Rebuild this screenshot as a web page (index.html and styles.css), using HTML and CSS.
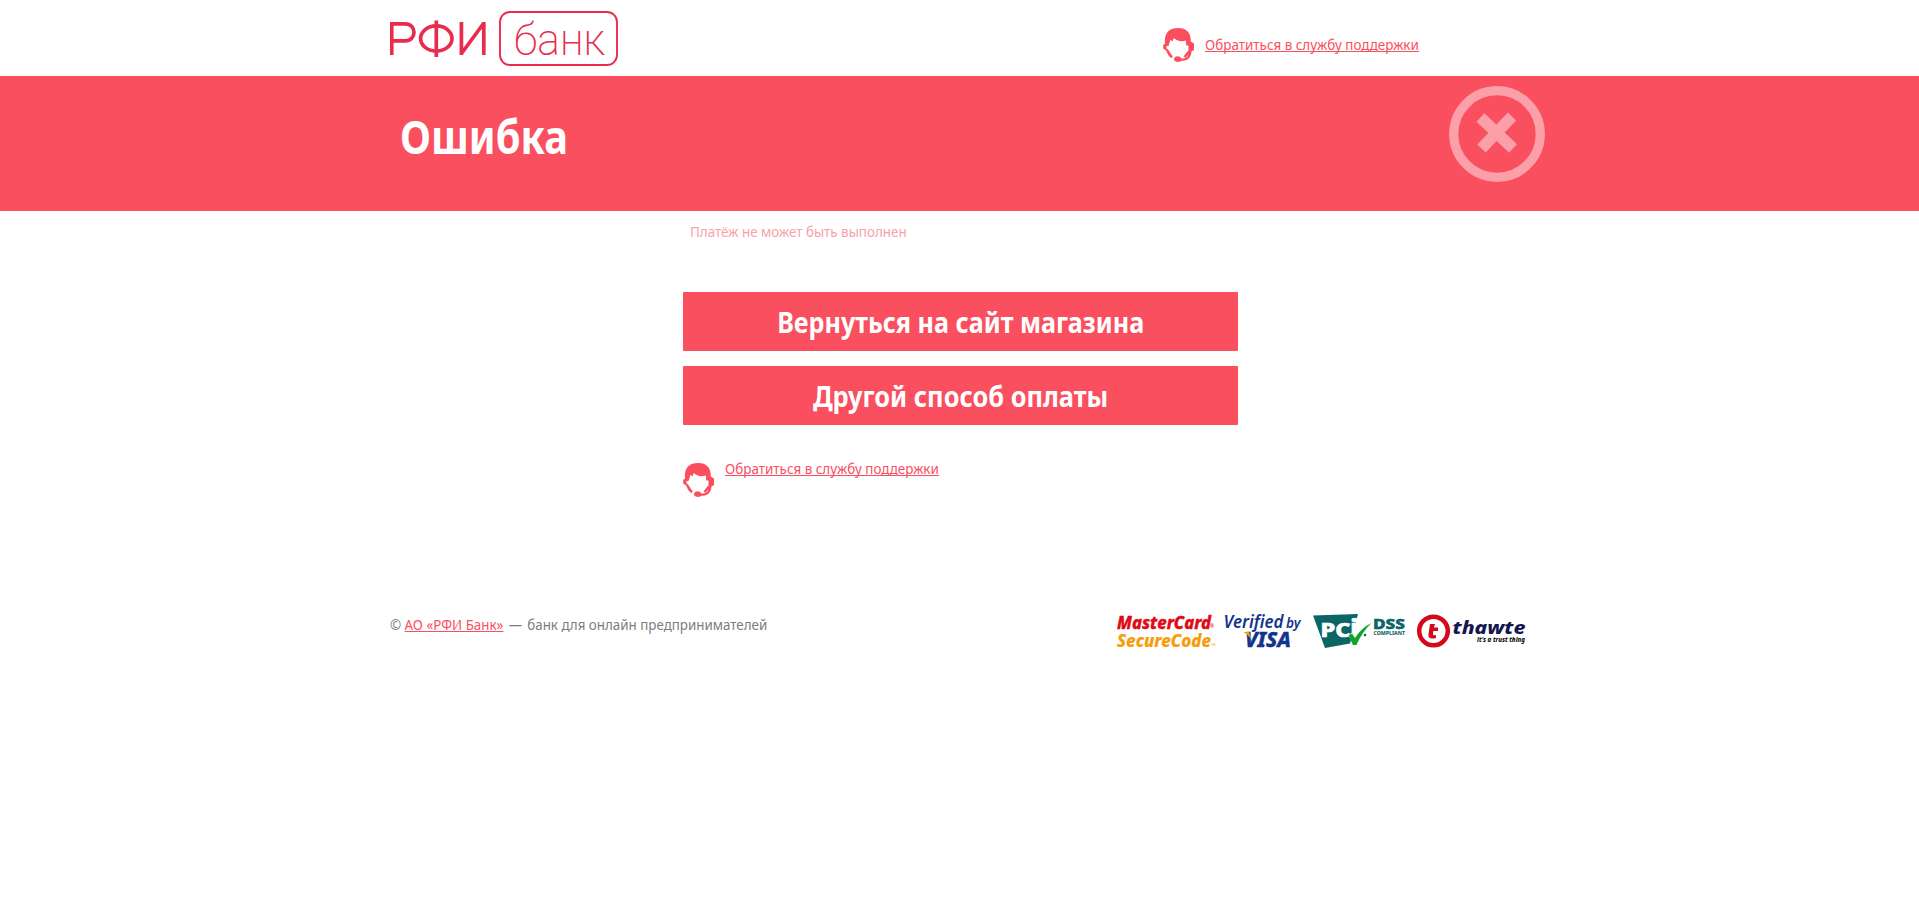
FILE: index.html
```html
<!DOCTYPE html>
<html lang="ru">
<head>
<meta charset="utf-8">
<title>Ошибка</title>
<link rel="stylesheet" href="styles.css">
</head>
<body>
<svg class="defs" width="0" height="0" aria-hidden="true">
  <symbol id="operator" viewBox="0 0 31 34">
    <path fill="#fb4f5f" d="M2 15.500C1 5 6 0 15 0C24 0 28 5 27.800 13.500L31 15.500V22L28.500 23.500C28 29.500 25 32.800 18.500 32.800C17 34.600 11 34.500 11 31.200C11 27.500 17 27.200 18.300 30.400C21 30.700 24.500 30 25.500 26.500L22.300 29.800L20.500 28.300C23 26 22.500 25 25.500 22.500V17.500L23.300 17.500L22.800 12.500C18.500 14 15 13.500 10.800 10L9.500 13.500L7.500 11.700L5.500 18L3.500 18V20.500C6.500 22 6 24 9.800 28.300L8.300 30.200C4.500 27 4.300 24.500 3 22.500L0.200 20.500V17Z"/>
  </symbol>
</svg>
<header class="container header">
  <svg class="logo" width="230" height="76" viewBox="0 0 230 76">
    <g fill="none" stroke="#e92c4d">
      <g stroke-width="3.700">
        <path d="M1.700 55V23.800H15C27 23.800 27 40.800 15 40.800H2"/>
        <ellipse cx="46.300" cy="38.500" rx="15.700" ry="12.600"/>
        <path d="M46.300 20.500V57M71.400 22V55M93.800 22V55M71.500 53.500L93.500 23.500"/>
      </g>
      <rect x="110" y="12" width="117" height="53" rx="10" stroke-width="1.900"/>
    </g>
    <text x="124" y="54.500" textLength="91" lengthAdjust="spacingAndGlyphs" class="logo-text">банк</text>
  </svg>
  <div class="support support-top">
    <svg width="31" height="34"><use href="#operator"/></svg>
    <a href="#" class="link"><span class="fit fit-support">Обратиться в службу поддержки</span></a>
  </div>
</header>
<section class="band">
  <div class="container band-inner">
    <h1 class="title"><span class="fit fit-title">Ошибка</span></h1>
    <svg class="cross" width="96" height="96" viewBox="0 0 96 96">
      <circle cx="48" cy="48" r="43.300" fill="none" stroke="#fb9fa8" stroke-width="9.200"/>
      <path d="M31.500 31.500L64 62.500M63 30.500L32.500 62.500" stroke="#fb9fa8" stroke-width="11.500"/>
    </svg>
  </div>
</section>
<main class="main">
  <p class="message"><span class="fit fit-message">Платёж не может быть выполнен</span></p>
  <a class="button" href="#"><span class="fit fit-b1">Вернуться на сайт магазина</span></a>
  <a class="button" href="#"><span class="fit fit-b2">Другой способ оплаты</span></a>
  <div class="support support-main">
    <svg width="31" height="34"><use href="#operator"/></svg>
    <a href="#" class="link"><span class="fit fit-support">Обратиться в службу поддержки</span></a>
  </div>
</main>
<footer class="container footer">
  <p class="copy"><span class="fit fit-copy">© <a href="#">АО «РФИ Банк»</a> <span class="dash">—</span> банк для онлайн предпринимателей</span></p>
  <svg class="badges" width="420" height="44" viewBox="1110 608 420 44">
    <g class="oblique bold">
      <text x="1117" y="628.500" font-size="18.500" fill="#df0a17" stroke="#df0a17" stroke-width=".4" textLength="94" lengthAdjust="spacingAndGlyphs">MasterCard</text>
      <text x="1117" y="647" font-size="18.500" fill="#f59d0a" stroke="#f59d0a" stroke-width=".2" textLength="94" lengthAdjust="spacingAndGlyphs">SecureCode</text>
    </g>
    <text x="1210" y="628" font-size="5" fill="#df0a17">®</text>
    <text x="1211" y="646" font-size="3" fill="#f59d0a">TM</text>
    <g fill="#12348a" class="oblique">
      <text x="1223.500" y="628" font-size="17.500" font-weight="600" textLength="60" lengthAdjust="spacingAndGlyphs">Verified</text>
      <text x="1286" y="628" font-size="15" font-weight="600" textLength="14.500" lengthAdjust="spacingAndGlyphs">by</text>
      <text x="1245" y="647" font-size="20.500" class="bold" stroke="#12348a" stroke-width=".4" textLength="46" lengthAdjust="spacingAndGlyphs">VISA</text>
    </g>
    <path d="M1243 632H1249L1251 639C1249 636 1247 634 1243 632Z" fill="#f5a40a"/>
    <path d="M1313 615.500L1358 614L1350 643.500L1325 648Z" fill="#0a6567"/>
    <path d="M1350 634L1355 641Q1361 630 1370 624" fill="none" stroke="#fff" stroke-width="5"/>
    <text x="1320.500" y="637" font-size="19" class="bold heavy" fill="#fff" textLength="30" lengthAdjust="spacingAndGlyphs">PC</text>
    <text x="1350" y="637" font-size="24" class="bold heavy" fill="#fff" textLength="9" lengthAdjust="spacingAndGlyphs">i</text>
    <circle cx="1365" cy="635" r="1.300" fill="#0a6567"/>
    <path d="M1348.500 635.500L1352 633.500L1355 638Q1361 628 1371.500 623Q1362 632 1356.500 645H1353Z" fill="#12a32d"/>
    <g fill="#0a6567" class="bold">
      <text x="1373" y="629" font-size="14.500" stroke="#0a6567" stroke-width=".5" textLength="32" lengthAdjust="spacingAndGlyphs">DSS</text>
      <text x="1373.500" y="635" font-size="5.500" textLength="31.500" lengthAdjust="spacingAndGlyphs">COMPLIANT</text>
    </g>
    <circle cx="1433.500" cy="631" r="14.300" fill="#fff" stroke="#d30a1b" stroke-width="4.500"/>
    <path d="M1430 624H1435L1434 627.500H1438V631H1433.300L1433 634Q1433 636 1436 635V638Q1427.500 640 1428.500 634Z" fill="#d30a1b"/>
    <text x="1452.500" y="634" font-size="17" class="oblique bold" fill="#141650" textLength="73" lengthAdjust="spacingAndGlyphs">thawte</text>
    <text x="1477" y="641.500" font-size="7.500" class="oblique bold" fill="#111" textLength="48" lengthAdjust="spacingAndGlyphs">it's a trust thing</text>
  </svg>
</footer>
</body>
</html>
```
FILE: styles.css
```css
* { box-sizing: border-box; }
body { margin: 0; background: #fff; color: #7d7d7d; font: 15px/20px "Noto Sans", "Open Sans", sans-serif; }
a { color: #f94f5f; }
h1, p { margin: 0; }
.defs { display: block; }
.container { width: 1139px; margin: 0 auto; }
.fit { display: inline-block; white-space: nowrap; transform-origin: left center; }
.fit-support { transform: scaleX(.896); }
.fit-title { transform: scaleX(.847); }
.fit-message { transform: scaleX(.894); }
.fit-b1 { transform: scaleX(.867); }
.fit-b2 { transform: scaleX(.876); }
.fit-copy { transform: scaleX(.89); }
.dash { margin: 0 2px; }
.header { display: flex; height: 76px; }
.logo { display: block; }
.logo-text { font: 200 45px Roboto, sans-serif; fill: #e92c4d; }
.support { display: flex; gap: 11px; }
.support svg { display: block; flex: none; }
.support-top { margin-left: 543px; padding-top: 28px; }
.support-top .link { margin-top: 6px; }
.link { display: block; height: 20px; text-decoration: none; }
.link .fit { height: 18px; line-height: 20px; border-bottom: 1px solid #f94f5f; }
.band { height: 135px; background: #f94f5f; }
.band-inner { display: flex; justify-content: space-between; padding: 10px 0 0 10px; }
.title { color: #fff; font-size: 47px; line-height: 64px; padding-top: 18px; }
.cross { margin-right: -16px; }
.main { width: 555px; margin: 0 0 0 calc(50% - 276.5px); padding-top: 10px; }
.message { height: 71px; padding-left: 7px; color: #fb9fa8; }
.button { display: flex; justify-content: center; height: 59px; margin-bottom: 15px; border-radius: 1px; background: #f94f5f; color: #fff; font-size: 29px; font-weight: 700; line-height: 60px; text-decoration: none; }
.button .fit { transform-origin: center; }
.support-main { margin-top: 38px; height: 34px; }
.support-main .link { margin-top: -5px; }
.footer { display: flex; justify-content: space-between; margin-top: 111px; }
.copy { padding-top: 6px; }
.badges { display: block; margin-right: -1px; font-family: "Noto Sans", sans-serif; }
.oblique { font-style: italic; }
.bold { font-weight: 800; }
.heavy { stroke: #fff; stroke-width: 0.6px; }
```
